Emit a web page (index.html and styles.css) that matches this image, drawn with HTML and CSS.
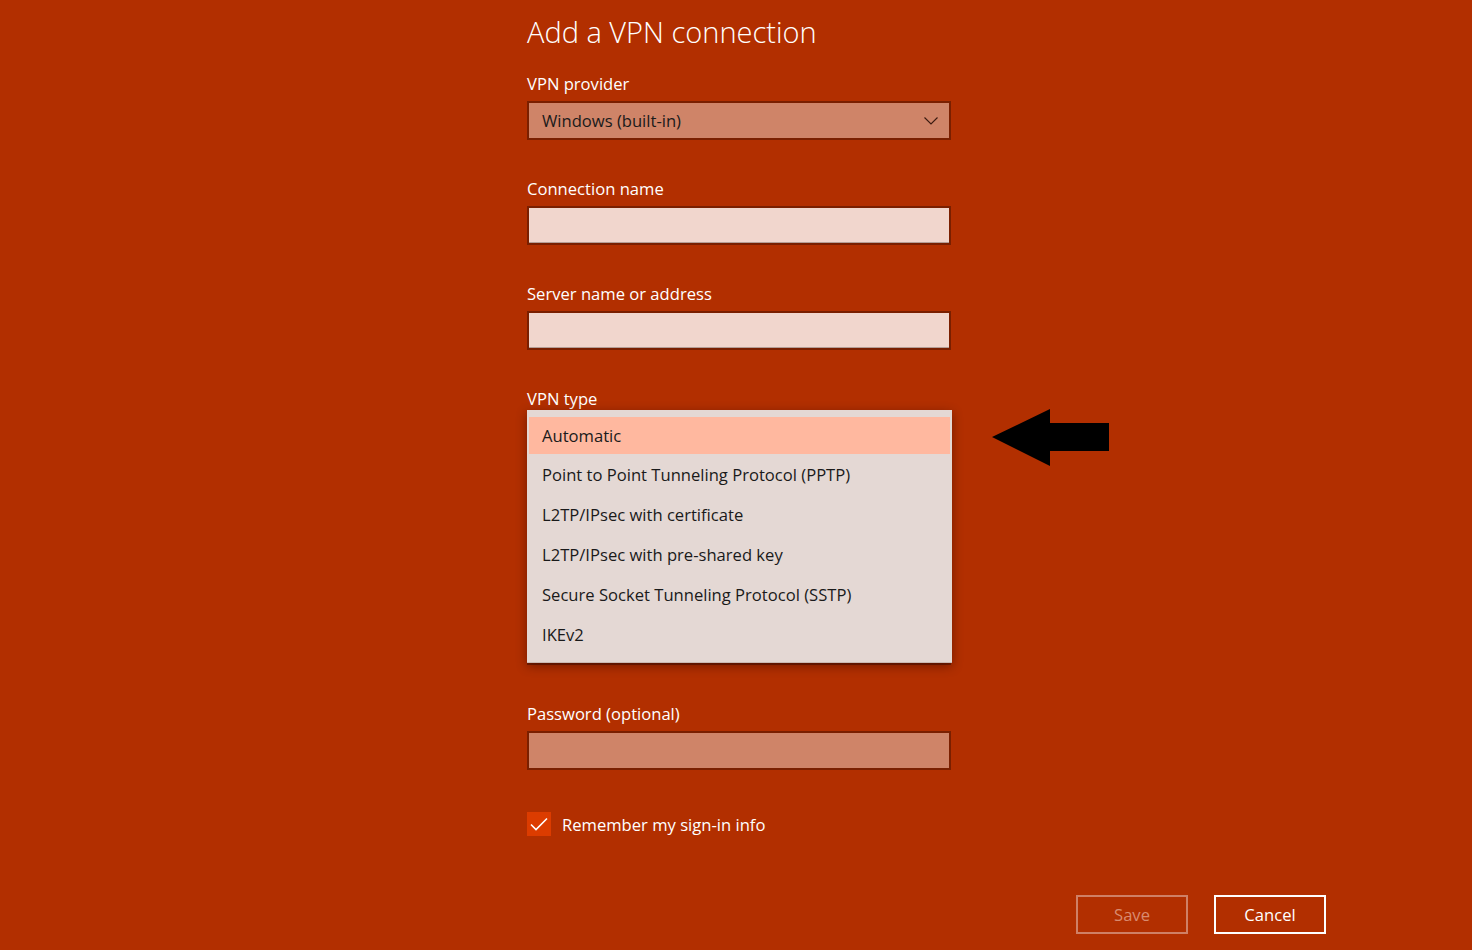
FILE: index.html
```html
<!DOCTYPE html>
<html>
  <head>
    <meta charset="utf-8" />

    <title>Add a VPN connection</title>

    <link rel="stylesheet" href="styles.css">
  </head>

  <body>
    <div class="page">
      <div class="form">
        <h1>Add a VPN connection</h1>

        <div class="field">
          <label>VPN provider</label>
          <div class="select">
            <span>Windows (built-in)</span>
            <svg class="chevron" width="14" height="8" viewBox="0 0 14 8">
              <path d="M0.5 0.5 L7 7 L13.5 0.5" fill="none" stroke="#3a1a10" stroke-width="1.1" />
            </svg>
          </div>
        </div>

        <div class="field">
          <label>Connection name</label>
          <div class="input"></div>
        </div>

        <div class="field">
          <label>Server name or address</label>
          <div class="input"></div>
        </div>

        <div class="field open">
          <label>VPN type</label>
          <div class="select"></div>

          <ul class="popup">
            <li class="selected">Automatic</li>
            <li>Point to Point Tunneling Protocol (PPTP)</li>
            <li>L2TP/IPsec with certificate</li>
            <li>L2TP/IPsec with pre-shared key</li>
            <li>Secure Socket Tunneling Protocol (SSTP)</li>
            <li>IKEv2</li>
          </ul>

          <!-- annotation arrow -->
          <svg class="arrow" width="118" height="58" viewBox="0 0 118 58">
            <polygon points="0,28 58,0 58,14 117,14 117,42 58,42 58,57" fill="#000" />
          </svg>
        </div>

        <!-- fields hidden behind the open list -->
        <div class="field covered">
          <div class="select"></div>
        </div>
        <div class="field covered">
          <div class="input"></div>
        </div>

        <div class="field">
          <label>Password (optional)</label>
          <div class="input dim"></div>
        </div>

        <div class="check">
          <span class="box">
            <svg width="24" height="24" viewBox="0 0 24 24">
              <path d="M4 12.5 L9 17.5 L20 6.5" fill="none" stroke="#fff" stroke-width="1.6" />
            </svg>
          </span>
          <span>Remember my sign-in info</span>
        </div>
      </div>

      <div class="buttons">
        <button class="btn save">Save</button>
        <button class="btn cancel">Cancel</button>
      </div>
    </div>
  </body>
</html>
```

FILE: styles.css
```css
html {
  font-family: "Open Sans", "Noto Sans", sans-serif;
  font-size: 16.6px;
}

body {
  margin: 0;
  background: #b22f00;
  color: #fff;
}

.page {
  height: 950px;
  display: flex;
  flex-direction: column;
  box-sizing: border-box;
  padding-top: 12px;
  overflow: hidden;
}

.form {
  margin-left: 527px;
  width: 424px;
  flex: 1;
}

h1 {
  margin: 0 0 21px;
  font-size: 29px;
  font-weight: 300;
  line-height: 40px;
}

.field {
  position: relative;
  margin-bottom: 38px;
}

.field label {
  display: block;
  line-height: 22px;
  margin-bottom: 6px;
}

.field.covered {
  padding-top: 28px;
}

.select,
.input {
  height: 39px;
  box-sizing: border-box;
  border: 2px solid #7a1f00;
  background: #cf8468;
  color: #1a1a1a;
  display: flex;
  align-items: center;
  justify-content: space-between;
  padding: 0 10px 0 13px;
}

.input {
  background: #f1d6cd;
  box-shadow: inset 0 -1px 0 #b49d95;
}

.input.dim {
  background: #cf8468;
  box-shadow: none;
}

.chevron {
  margin-right: 1px;
}

.popup {
  position: absolute;
  top: 22px;
  left: 0;
  width: 425px;
  margin: 0;
  padding: 5px 0 7px;
  list-style: none;
  background: #e4d8d4;
  color: #1a1a1a;
  box-shadow: 0 3px 10px rgba(40, 0, 0, 0.45);
  border-bottom: 1px solid #c9b9b3;
  z-index: 2;
}

.popup li {
  height: 40px;
  line-height: 40px;
  padding-left: 15px;
}

.popup li.selected {
  background: #ffb89f;
  margin: 2px 2px 1px;
  height: 37px;
  line-height: 37px;
  padding-left: 13px;
}

.arrow {
  position: absolute;
  left: 465px;
  top: 21px;
  z-index: 3;
}

.check {
  display: flex;
  align-items: center;
  gap: 11px;
  margin-top: 42px;
}

.box {
  width: 24px;
  height: 24px;
  background: #dc3c00;
}

.box svg {
  display: block;
}

.buttons {
  display: flex;
  justify-content: flex-end;
  gap: 26px;
  padding: 0 146px 16px 0;
}

.btn {
  width: 112px;
  height: 39px;
  font-family: inherit;
  font-size: 16.6px;
  background: transparent;
  border: 2px solid #fff;
  color: #fff;
}

.btn.save {
  border-color: #cf8066;
  color: #d98b70;
}
```
